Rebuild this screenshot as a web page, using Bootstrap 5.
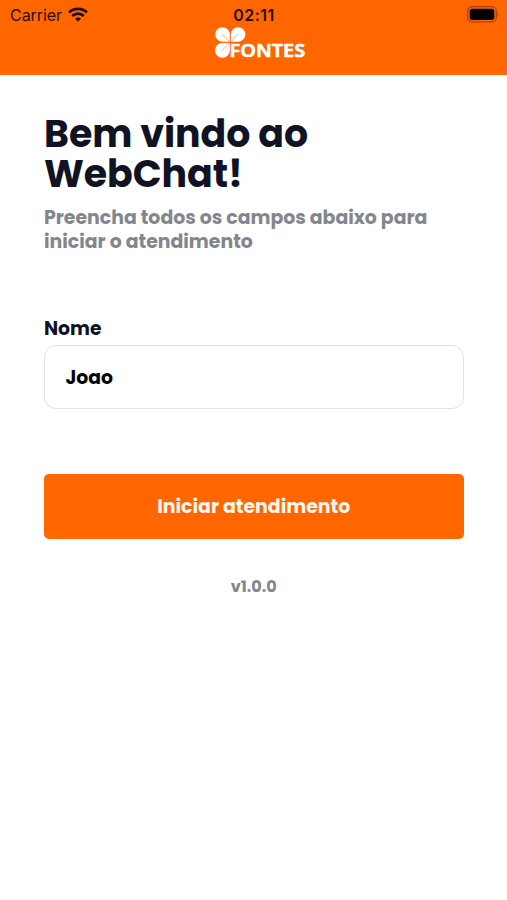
<!DOCTYPE html>
<html lang="pt-BR">
<head>
<meta charset="utf-8">
<meta name="viewport" content="width=device-width, initial-scale=1">
<title>WebChat</title>
<link href="https://cdn.jsdelivr.net/npm/bootstrap@5.3.0/dist/css/bootstrap.min.css" rel="stylesheet">
<style>
  body { font-family: Poppins, Inter, "Liberation Sans", sans-serif; font-weight: 700; color: #101323; }
  .app-header { height: 75px; background: #ff6600; }
  .status-bar { height: 27px; padding: 3px 8px 0 10px; color: #2b0f00; font-family: Inter, sans-serif; font-size: 16px; line-height: 24px; }
  .status-bar > div { flex: 1 1 0; }
  .carrier { font-weight: 400; letter-spacing: -.05px; }
  .clock { font-weight: 600; letter-spacing: .5px; margin-left: -1px; }
  .status-wifi { margin-left: 6px; margin-top: -2px; }
  .status-battery { margin-top: -2px; }
  .brand { margin-left: 18px; }
  .content { padding: 39px 43.5px 0 44px; }
  .title { font-size: 37.9px; line-height: 40px; font-weight: 700; letter-spacing: -.05px; }
  .subtitle { margin-top: 12px; font-size: 18.88px; line-height: 24px; color: #83868d; }
  .field { margin-top: 63px; }
  .form-label { font-size: 18.8px; line-height: 24px; margin-bottom: 3.5px; }
  .form-control { height: 64px; border: 1.5px solid #e2e2e5; border-radius: 12px; padding: 1px 20.5px 0; font-size: 18.8px; font-weight: 700; color: #050508; }
  .btn-start { height: 65px; margin-top: 65px; padding-top: 8px; background: #ff6600; color: #fff5ec; border: 0; border-radius: 5px; font-size: 18.9px; font-weight: 700; }
  .btn-start:hover { background: #ee5f00; color: #fff; }
  .version { margin-top: 36px; font-size: 16px; line-height: 24px; color: #83868d; }
</style>
</head>
<body class="bg-white">
<header class="app-header">
  <div class="status-bar d-flex align-items-center">
    <div class="d-flex align-items-center">
      <span class="carrier">Carrier</span>
      <svg class="status-wifi" width="20" height="15" viewBox="0 0 20 15" fill="none" stroke="#210b00" stroke-width="2.7" aria-hidden="true">
        <path d="M1 5.5C6 .7 14 .7 19 5.5M4.2 8.9c3.3-3.1 8.3-3.1 11.6 0"/>
        <path d="M7 11.6c1.7-1.6 4.3-1.6 6 0L10 14.7z" fill="#210b00" stroke="none"/>
      </svg>
    </div>
    <div class="clock text-center">02:11</div>
    <div class="d-flex justify-content-end">
      <svg class="status-battery" width="32" height="17" viewBox="0 0 32 17" aria-hidden="true">
        <rect x=".7" y=".7" width="28.6" height="15.2" rx="4.3" fill="none" stroke="#a94200" stroke-width="1.2"/>
        <rect x="2.7" y="2.7" width="24.6" height="11.2" rx="2.6" fill="#000"/>
        <path d="M30.6 6.2c1.4.6 1.4 3.6 0 4.2z" fill="#a94200"/>
      </svg>
    </div>
  </div>
  <div class="brand d-flex justify-content-center">
    <svg width="96" height="40" viewBox="0 0 96 40" role="img" aria-label="Fontes">
      <g fill="#fff">
        <path d="M14.8 14.8H7.4A7.3 7.3 0 1 1 14.8 7.4z"/>
        <path d="M15.8 14.8V7.4a7.3 7.3 0 1 1 7.4 7.4z"/>
        <path d="M14.8 15.9v7.6a7.4 7.4 0 1 1-7.4-7.6z"/>
      </g>
      <g stroke="#ff9c60" stroke-width=".8" fill="none">
        <path d="M14.6 14.6 6.8 7.2M16 14.6l6.8-7.4M14.6 16.1l-8 7.5"/>
      </g>
      <text x="14.6" y="29.9" font-family="'Noto Sans', sans-serif" font-size="18.2" font-weight="600" fill="#fff" stroke="#fff" stroke-width=".7" stroke-linejoin="round" textLength="75.5" lengthAdjust="spacingAndGlyphs">FONTES</text>
    </svg>
  </div>
</header>
<main class="content">
  <h1 class="title mb-0">Bem vindo ao<br>WebChat!</h1>
  <p class="subtitle mb-0">Preencha todos os campos abaixo para<br>iniciar o atendimento</p>
  <form>
    <div class="field">
      <label class="form-label d-block" for="nome">Nome</label>
      <input id="nome" type="text" class="form-control" value="Joao">
    </div>
    <button type="button" class="btn btn-start w-100">Iniciar atendimento</button>
  </form>
  <p class="version text-center mb-0">v1.0.0</p>
</main>
<script src="https://cdn.jsdelivr.net/npm/bootstrap@5.3.0/dist/js/bootstrap.bundle.min.js"></script>
</body>
</html>
